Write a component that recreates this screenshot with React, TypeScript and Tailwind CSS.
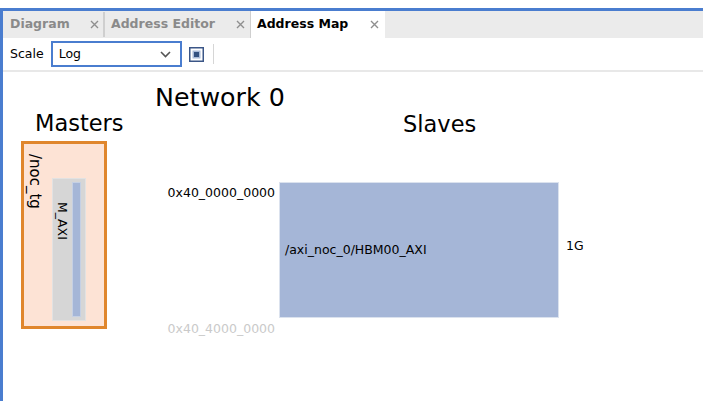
import React from 'react';

const font = { fontFamily: '"DejaVu Sans", "Liberation Sans", sans-serif' };

const CloseIcon = () => (
  <svg width="9" height="9" viewBox="0 0 9 9" className="shrink-0">
    <path d="M1 1 L8 8 M8 1 L1 8" stroke="#8f8f8f" strokeWidth="1.4" />
  </svg>
);

interface TabProps {
  label: string;
  active?: boolean;
  width: string;
  padding: string;
}

const Tab = ({ label, active, width, padding }: TabProps) => (
  <div
    className={`flex items-center justify-between h-full ${width} ${padding} ${
      active ? 'bg-white text-black' : 'text-[#8a8a8a]'
    }`}
  >
    <span className="text-[12.5px] font-bold leading-none">{label}</span>
    <CloseIcon />
  </div>
);

const App = () => {
  return (
    <div className="w-[703px] h-[401px] bg-white pt-[8px] overflow-hidden" style={font}>
      <div className="h-[393px] border-t-[3px] border-l-[3px] border-[#4a7dcf] flex flex-col">
        {/* tab bar */}
        <div className="h-[27px] bg-[#ebebeb] flex items-stretch">
          <Tab label="Diagram" width="w-[100px]" padding="pl-[7px] pr-[4px]" />
          <div className="w-[2px] my-[1px] bg-[#cfcfcf]" />
          <Tab label="Address Editor" width="w-[145px]" padding="pl-[6px] pr-[5px]" />
          <div className="w-[1px] bg-[#cfcfcf]" />
          <Tab label="Address Map" active width="w-[134px]" padding="pl-[6px] pr-[6px]" />
        </div>

        {/* toolbar */}
        <div className="h-[32px] flex items-center pl-[7px] border-b-2 border-[#e8e8e8] box-content">
          <span className="text-[12.5px] leading-none text-black">Scale</span>
          <div className="ml-[7px] w-[131px] h-[26px] border-2 border-[#4a7dcf] flex items-center justify-between pl-[6px] pr-[9px]">
            <span className="text-[12.5px] leading-none text-black">Log</span>
            <svg width="11" height="7" viewBox="0 0 11 7">
              <path d="M1 1 L5.5 5.5 L10 1" stroke="#555" strokeWidth="1.6" fill="none" />
            </svg>
          </div>
          <svg width="15" height="15" viewBox="0 0 15 15" className="ml-[7px]">
            <rect x="0.75" y="0.75" width="13.5" height="13.5" fill="white" stroke="#3b5687" strokeWidth="1.5" />
            <rect x="3.5" y="3.5" width="8" height="8" fill="#a9bad8" />
            <rect x="5" y="5" width="5" height="5" fill="#33507f" />
          </svg>
          <div className="ml-[9px] w-[1px] h-[20px] bg-[#d6d6d6]" />
        </div>

        {/* address map canvas */}
        <div className="relative flex-1 text-black">
          <div className="absolute left-[152px] top-[13px] text-[25.3px] leading-none">Network 0</div>
          <div className="absolute left-[32px] top-[40px] text-[22.5px] leading-none">Masters</div>
          <div className="absolute left-[400px] top-[41px] text-[22.5px] leading-none">Slaves</div>

          {/* master */}
          <div className="absolute left-[18px] top-[69px] w-[86px] h-[188px] border-[3px] border-[#e0862c] bg-[#fde3d5]">
            <div
              className="absolute left-[3px] top-[10px] text-[15px] leading-none"
              style={{ writingMode: 'vertical-rl' }}
            >
              /noc_tg
            </div>
            <div className="absolute left-[28px] top-[34px] w-[34px] h-[143px] bg-[#d6d6d6] border border-[#e2e2e2]">
              <div
                className="absolute left-[2px] top-[23px] text-[12.5px] leading-none"
                style={{ writingMode: 'vertical-rl' }}
              >
                M_AXI
              </div>
              <div className="absolute left-[19px] top-[3px] w-[9px] h-[135px] bg-[#a5b6d7] border border-[#c5d0e4]" />
            </div>
          </div>

          {/* addresses */}
          <div className="absolute left-[162px] top-[115px] w-[110px] text-right text-[12.5px] leading-none">
            0x40_0000_0000
          </div>
          <div className="absolute left-[162px] top-[251px] w-[110px] text-right text-[12.5px] leading-none text-[#cacaca]">
            0x40_4000_0000
          </div>

          {/* slave */}
          <div className="absolute left-[276px] top-[110px] w-[280px] h-[136px] bg-[#a5b6d7] border border-[#dbe2ee] flex items-center pl-[5px]">
            <span className="text-[12.5px] leading-none">/axi_noc_0/HBM00_AXI</span>
          </div>
          <div className="absolute left-[563px] top-[168px] text-[12.5px] leading-none">1G</div>
        </div>
      </div>
    </div>
  );
};

export default App;
